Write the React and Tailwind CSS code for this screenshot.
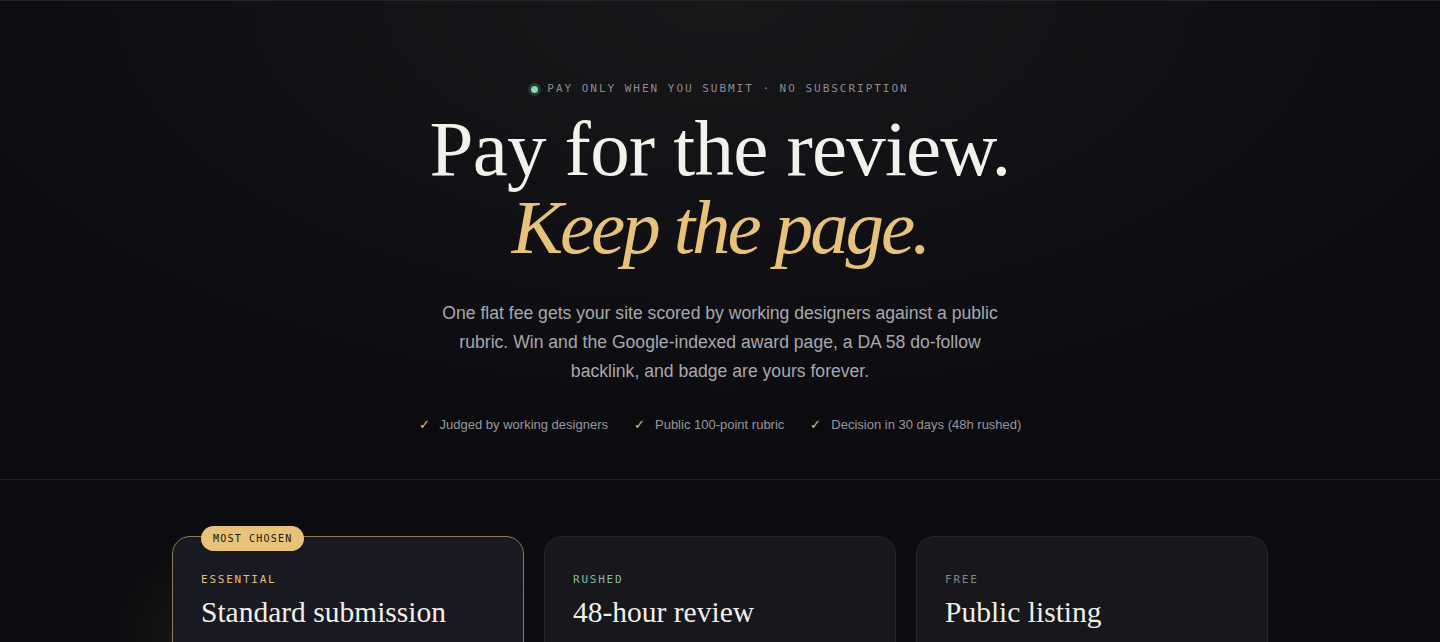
import React from 'react';

const serif = { fontFamily: '"Liberation Serif", "DejaVu Serif", serif' };
const mono = { fontFamily: '"DejaVu Sans Mono", "Liberation Mono", monospace' };

const perks = ['Judged by working designers', 'Public 100-point rubric', 'Decision in 30 days (48h rushed)'];

const plans = [
  { tag: 'ESSENTIAL', tagClass: 'text-[#e2bf7c]', title: 'Standard submission', featured: true },
  { tag: 'RUSHED', tagClass: 'text-[#7fbf9f]', title: '48-hour review' },
  { tag: 'FREE', tagClass: 'text-[#85858c]', title: 'Public listing' },
];

function PlanCard({ plan }) {
  return (
    <div
      className={`relative h-[130px] rounded-[18px] border px-7 pt-[35px] ${
        plan.featured
          ? 'border-[#8c7a55] bg-[#191a21] shadow-[-30px_40px_80px_-20px_rgba(232,194,121,0.10)]'
          : 'border-[#25252b] bg-[#17171c]'
      }`}
    >
      {plan.featured && (
        <span
          className="absolute -top-[11px] left-7 rounded-full bg-[#e8c279] px-3 py-[5px] text-[10px] tracking-[0.12em] text-[#1a1510]"
          style={mono}
        >
          MOST CHOSEN
        </span>
      )}
      <p className={`text-[11px] tracking-[0.16em] ${plan.tagClass}`} style={mono}>
        {plan.tag}
      </p>
      <h3 className="mt-[9px] text-[29.5px] leading-none text-[#f1efe9]" style={serif}>
        {plan.title}
      </h3>
    </div>
  );
}

export default function App() {
  return (
    <div
      className="min-h-screen overflow-hidden bg-[#0c0c10] text-white"
      style={{ fontFamily: '"Liberation Sans", Arial, sans-serif' }}
    >
      {/* Hero */}
      <section className="border-t border-[#232326] border-b border-b-[#1e1e23] bg-[radial-gradient(ellipse_60%_90%_at_50%_0%,#18171a_0%,#0f0f13_70%,#0c0c10_100%)] pb-[45px] pt-[80px] text-center">
        <div className="flex items-center justify-center gap-[9px]">
          <span className="h-[7px] w-[7px] rounded-full bg-[#86d9b0] shadow-[0_0_0_3px_rgba(134,217,176,0.18)]" />
          <span className="text-[11px] tracking-[0.18em] text-[#8b8b90]" style={mono}>
            PAY ONLY WHEN YOU SUBMIT · NO SUBSCRIPTION
          </span>
        </div>

        <h1 className="mt-[12px] text-[79px] leading-[78px] tracking-[-0.01em]" style={serif}>
          <span className="block text-[#f3f1ec]">Pay for the review.</span>
          <span className="block text-[77px] italic tracking-[-0.04em] text-[#e6c27a]">Keep the page.</span>
        </h1>

        <p className="mx-auto mt-[33px] max-w-[590px] text-[17.6px] leading-[29px] text-[#a8a8ad]">
          One flat fee gets your site scored by working designers against a public rubric. Win and the
          Google-indexed award page, a DA 58 do-follow backlink, and badge are yours forever.
        </p>

        <ul className="mt-[29px] flex items-center justify-center gap-[26px] text-[13px] text-[#97979c]">
          {perks.map((p) => (
            <li key={p} className="flex items-center gap-[10px]">
              <span className="text-[#e2bf7c]">✓</span>
              {p}
            </li>
          ))}
        </ul>
      </section>

      {/* Plans */}
      <section className="mx-auto grid w-[1096px] grid-cols-3 gap-5 pt-[56px]">
        {plans.map((plan) => (
          <PlanCard key={plan.title} plan={plan} />
        ))}
      </section>
    </div>
  );
}
